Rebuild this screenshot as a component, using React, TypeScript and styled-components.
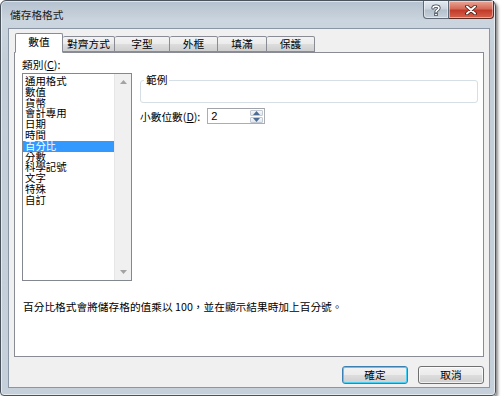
import React from "react";
import styled, { createGlobalStyle } from "styled-components";

const GlobalStyle = createGlobalStyle`
  body {
    margin: 0;
    background: #ffffff;
    font-family: "Noto Sans CJK TC", "Noto Sans", sans-serif;
    font-size: 10.7px;
    color: #000;
  }
`;

const Window = styled.div`
  box-sizing: border-box;
  width: 496px;
  height: 396px;
  display: flex;
  flex-direction: column;
  border: 1px solid #4a525c;
  border-radius: 6px 6px 4px 4px;
  background: linear-gradient(180deg, #b4c1ce 0px, #cbd5df 20px, #c3ced9 60px, #c6d0da 100%);
  box-shadow: inset 0 0 0 1px rgba(255, 255, 255, 0.55), 2px 2px 3px rgba(0, 0, 0, 0.45);
`;

const TitleBar = styled.div`
  height: 27px;
  display: flex;
  justify-content: space-between;
  align-items: flex-start;
  padding: 0 1px 0 9px;
`;

const Title = styled.span`
  line-height: 28px;
  font-size: 10.7px;
  color: #1b1b1b;
`;

const CaptionButtons = styled.div`
  display: flex;
`;

const CaptionButton = styled.div<{ $close?: boolean }>`
  box-sizing: border-box;
  width: ${(p) => (p.$close ? 45 : 26)}px;
  height: 18px;
  display: flex;
  align-items: center;
  justify-content: center;
  border: 1px solid ${(p) => (p.$close ? "#5b2a22" : "#5f6874")};
  border-top: none;
  border-left-width: ${(p) => (p.$close ? 0 : 1)}px;
  border-radius: ${(p) => (p.$close ? "0 0 4px 0" : "0 0 0 4px")};
  background: ${(p) =>
    p.$close
      ? "linear-gradient(180deg, #e9a898 0%, #d56a58 45%, #c23a2a 55%, #d5634c 100%)"
      : "linear-gradient(180deg, #e4eaf0 0%, #cbd4de 45%, #b4c0cc 55%, #c8d2dc 100%)"};
  box-shadow: inset 0 0 0 1px rgba(255, 255, 255, 0.45);
`;

const Client = styled.div`
  flex: 1;
  margin: 0 5px 7px 7px;
  display: flex;
  flex-direction: column;
  padding: 4px 5px 3px 5px;
  background: #f0f0f0;
  border: 1px solid #8a96a3;
`;

const TabStrip = styled.div`
  display: flex;
  align-items: flex-end;
  height: 20px;
  padding-left: 1px;
  margin-bottom: -1px;
  position: relative;
  z-index: 1;
`;

const Tab = styled.div<{ $w: number; $active?: boolean }>`
  box-sizing: border-box;
  width: ${(p) => p.$w}px;
  height: ${(p) => (p.$active ? 20 : 16)}px;
  margin-bottom: ${(p) => (p.$active ? 0 : 1)}px;
  display: flex;
  align-items: center;
  justify-content: center;
  border: 1px solid #898c95;
  border-left-width: ${(p) => (p.$active ? 1 : 0)}px;
  border-bottom-color: ${(p) => (p.$active ? "#ffffff" : "#898c95")};
  border-radius: 2px 2px 0 0;
  background: ${(p) =>
    p.$active ? "#ffffff" : "linear-gradient(180deg, #f3f3f3 0%, #ebebeb 50%, #dddddd 51%, #cfcfcf 100%)"};
  padding-bottom: ${(p) => (p.$active ? 2 : 0)}px;
  line-height: 14px;
`;

const Panel = styled.div`
  flex: 1;
  display: flex;
  flex-direction: column;
  background: #ffffff;
  border: 1px solid #898c95;
  padding: 3px 5px 0 7px;
`;

const Columns = styled.div`
  display: grid;
  grid-template-columns: 110px 1fr;
  column-gap: 8px;
`;

const Column = styled.div`
  display: flex;
  flex-direction: column;
`;

const FieldLabel = styled.div`
  line-height: 17px;
  height: 17px;
  u {
    text-decoration: underline;
  }
`;

const ListBox = styled.div`
  box-sizing: border-box;
  height: 208px;
  display: flex;
  border: 1px solid #828790;
  background: #ffffff;
`;

const ListItems = styled.div`
  flex: 1;
  padding-top: 2px;
`;

const ListItem = styled.div<{ $selected?: boolean }>`
  height: 10.8px;
  line-height: 10.8px;
  font-size: 10.4px;
  padding-left: 2px;
  white-space: nowrap;
  background: ${(p) => (p.$selected ? "#3399ff" : "transparent")};
  color: ${(p) => (p.$selected ? "#ffffff" : "#000000")};
`;

const ScrollBar = styled.div`
  width: 16px;
  display: flex;
  flex-direction: column;
  justify-content: space-between;
  align-items: center;
  background: #f0f0f0;
  border-left: 1px solid #e6e6e6;
  padding: 6px 0;
`;

const GroupBox = styled.fieldset`
  margin: 18px 0 0 0;
  padding: 0;
  border: 1px solid #d5dfe5;
  border-radius: 3px;
  min-width: 0;
`;

const Legend = styled.legend`
  margin-left: 3px;
  padding: 0 2px;
  line-height: 12px;
  font-size: 10.7px;
`;

const GroupBody = styled.div`
  height: 16px;
`;

const SpinRow = styled.div`
  display: flex;
  align-items: center;
  gap: 7px;
  margin-top: 5px;
  height: 16px;
`;

const SpinBox = styled.div`
  box-sizing: border-box;
  width: 58px;
  height: 16px;
  display: flex;
  border: 1px solid #abadb3;
  border-top-color: #a0a3aa;
  background: #ffffff;
`;

const SpinValue = styled.div`
  flex: 1;
  padding-left: 3px;
  line-height: 14px;
  font-family: "Liberation Sans", "Noto Sans", sans-serif;
  font-size: 11px;
`;

const SpinButtons = styled.div`
  width: 13px;
  display: flex;
  flex-direction: column;
  margin: 1px 1px 1px 0;
  gap: 1px;
`;

const SpinButton = styled.div`
  flex: 1;
  display: flex;
  align-items: center;
  justify-content: center;
  border: 1px solid #c3c9d2;
  border-radius: 1px;
  background: linear-gradient(180deg, #f5f7fa 0%, #e2e7ee 100%);
`;

const Description = styled.div`
  margin-top: 19px;
  line-height: 14px;
  padding-left: 1px;
  white-space: nowrap;
`;

const ButtonRow = styled.div`
  display: flex;
  justify-content: flex-end;
  gap: 10px;
  padding-top: 9px;
`;

const PushButton = styled.div<{ $default?: boolean }>`
  box-sizing: border-box;
  width: 66px;
  height: 18px;
  display: flex;
  align-items: center;
  justify-content: center;
  border: 1px solid ${(p) => (p.$default ? "#3c7fb1" : "#707070")};
  border-radius: 3px;
  background: linear-gradient(180deg, #f2f2f2 0%, #ebebeb 50%, #dddddd 51%, #cfcfcf 100%);
  box-shadow: ${(p) =>
    p.$default ? "inset 0 0 0 1px #48d0f5" : "inset 0 0 0 1px rgba(255, 255, 255, 0.7)"};
  line-height: 14px;
`;

const Arrow = ({ dir, color }: { dir: "up" | "down"; color: string }) => (
  <svg width="7" height="4" viewBox="0 0 7 4">
    <path d={dir === "up" ? "M0 4 L3.5 0 L7 4 Z" : "M0 0 L3.5 4 L7 0 Z"} fill={color} />
  </svg>
);

const HelpGlyph = () => (
  <svg width="10" height="12" viewBox="0 0 10 12">
    <path
      d="M2 4 C2 1.5 8 1.5 8 4 C8 6 5 6 5 8"
      fill="none"
      stroke="#3a4450"
      strokeWidth="3.2"
      strokeLinecap="round"
    />
    <path
      d="M2 4 C2 1.5 8 1.5 8 4 C8 6 5 6 5 8"
      fill="none"
      stroke="#ffffff"
      strokeWidth="1.6"
      strokeLinecap="round"
    />
    <rect x="3.7" y="9.3" width="2.6" height="2.4" fill="#ffffff" stroke="#3a4450" strokeWidth="0.8" />
  </svg>
);

const CloseGlyph = () => (
  <svg width="12" height="10" viewBox="0 0 12 10">
    <path d="M2 1.5 L10 8.5 M10 1.5 L2 8.5" stroke="#3b1a14" strokeWidth="3.6" strokeLinecap="round" />
    <path d="M2 1.5 L10 8.5 M10 1.5 L2 8.5" stroke="#ffffff" strokeWidth="2" strokeLinecap="round" />
  </svg>
);

const tabs = [
  { name: "數值", w: 48 },
  { name: "對齊方式", w: 52 },
  { name: "字型", w: 55 },
  { name: "外框", w: 48 },
  { name: "填滿", w: 49 },
  { name: "保護", w: 48 },
];

const categories = [
  "通用格式",
  "數值",
  "貨幣",
  "會計專用",
  "日期",
  "時間",
  "百分比",
  "分數",
  "科學記號",
  "文字",
  "特殊",
  "自訂",
];

export default function App() {
  return (
    <>
      <GlobalStyle />
      <Window>
        <TitleBar>
          <Title>儲存格格式</Title>
          <CaptionButtons>
            <CaptionButton>
              <HelpGlyph />
            </CaptionButton>
            <CaptionButton $close>
              <CloseGlyph />
            </CaptionButton>
          </CaptionButtons>
        </TitleBar>
        <Client>
          <TabStrip>
            {tabs.map((t, i) => (
              <Tab key={`tab_${t.name}`} $w={t.w} $active={i === 0}>
                {t.name}
              </Tab>
            ))}
          </TabStrip>
          <Panel>
            <Columns>
              <Column>
                <FieldLabel>
                  類別(<u>C</u>):
                </FieldLabel>
                <ListBox>
                  <ListItems>
                    {categories.map((c) => (
                      <ListItem key={c} $selected={c === "百分比"}>
                        {c}
                      </ListItem>
                    ))}
                  </ListItems>
                  <ScrollBar>
                    <Arrow dir="up" color="#a3a3a3" />
                    <Arrow dir="down" color="#a3a3a3" />
                  </ScrollBar>
                </ListBox>
              </Column>
              <Column>
                <GroupBox>
                  <Legend>範例</Legend>
                  <GroupBody />
                </GroupBox>
                <SpinRow>
                  <span>
                    小數位數(<u>D</u>):
                  </span>
                  <SpinBox>
                    <SpinValue>2</SpinValue>
                    <SpinButtons>
                      <SpinButton>
                        <Arrow dir="up" color="#4d6d94" />
                      </SpinButton>
                      <SpinButton>
                        <Arrow dir="down" color="#4d6d94" />
                      </SpinButton>
                    </SpinButtons>
                  </SpinBox>
                </SpinRow>
              </Column>
            </Columns>
            <Description>百分比格式會將儲存格的值乘以 100，並在顯示結果時加上百分號。</Description>
          </Panel>
          <ButtonRow>
            <PushButton $default>確定</PushButton>
            <PushButton>取消</PushButton>
          </ButtonRow>
        </Client>
      </Window>
    </>
  );
}
